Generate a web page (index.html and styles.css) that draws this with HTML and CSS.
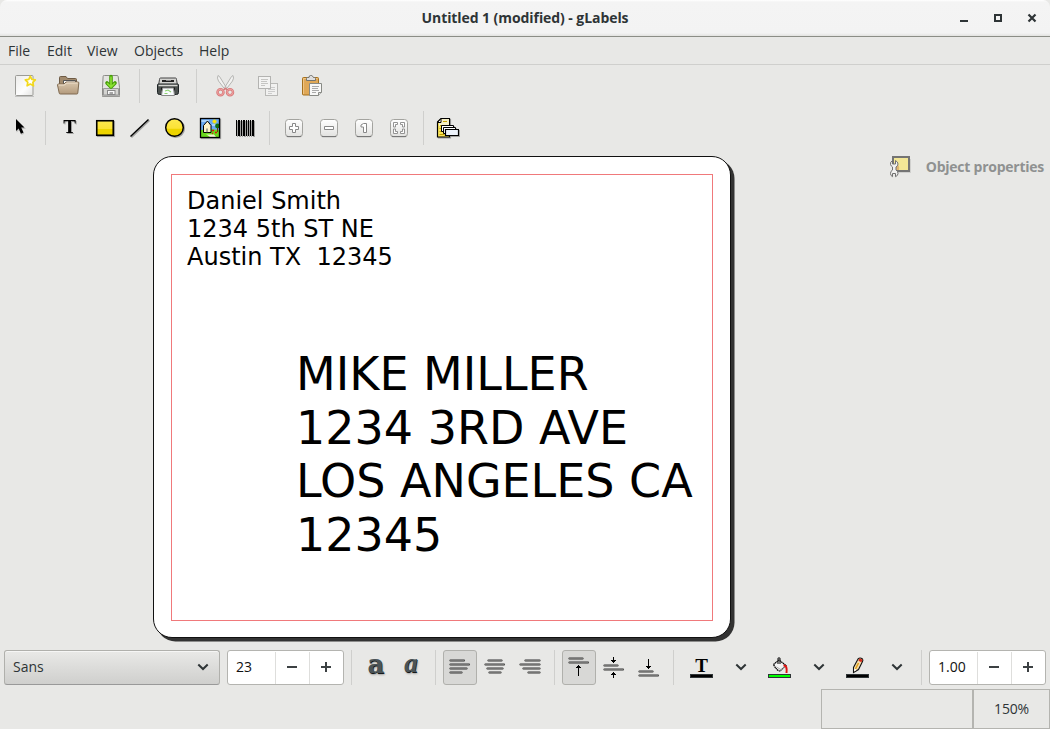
FILE: index.html
```html
<!DOCTYPE html>
<html lang="en">

<head>
    <meta charset="UTF-8">
    <meta name="viewport" content="width=device-width, initial-scale=1.0">
    <title>Untitled 1 (modified) - gLabels</title>
    <link rel="stylesheet" href="styles.css">
</head>

<body>
    <!-- shared gradients and small symbols -->
    <svg class="defs" width="0" height="0">
        <defs>
            <linearGradient id="yellow" x2="0" y2="1">
                <stop offset="0" stop-color="#fce94f" />
                <stop offset=".55" stop-color="#fbe236" />
                <stop offset=".58" stop-color="#edd400" />
                <stop offset="1" stop-color="#edd400" />
            </linearGradient>
            <linearGradient id="paper" x2="1" y2="1">
                <stop offset="0" stop-color="#ececea" />
                <stop offset=".6" stop-color="#fdfdfd" />
                <stop offset="1" stop-color="#e4e4e2" />
            </linearGradient>
            <linearGradient id="folder" x2="0" y2="1">
                <stop offset="0" stop-color="#d9c7ae" />
                <stop offset="1" stop-color="#b39a7c" />
            </linearGradient>
            <linearGradient id="key" x2="0" y2="1">
                <stop offset="0" stop-color="#fff" />
                <stop offset="1" stop-color="#e2e2e0" />
            </linearGradient>
        </defs>
        <symbol id="keycap" viewBox="0 0 24 24">
            <rect x="4.5" y="4.5" width="17" height="17" rx="3" fill="#aaa" opacity=".6" />
            <rect x="4.5" y="3.5" width="17" height="17" rx="3" fill="url(#key)" stroke="#a3a39f" />
            <path d="M6 20.5h14" stroke="#777" />
        </symbol>
        <symbol id="chevron" viewBox="0 0 12 8">
            <path d="M1.3 1.5L6 6l4.700-4.500" fill="none" stroke="#2e3436" stroke-width="2" />
        </symbol>
    </svg>

    <header class="titlebar">
        <h1>Untitled 1 (modified) - gLabels</h1>
        <div class="controls">
            <svg width="10" height="10"><path d="M1 8h8" stroke="#2e3436" stroke-width="2" /></svg>
            <svg width="10" height="10"><path d="M2 2h6v6h-6z" fill="none" stroke="#2e3436" stroke-width="2" /></svg>
            <svg width="10" height="10"><path d="M1.500 1.500l7 7M8.500 1.500l-7 7" stroke="#2e3436" stroke-width="2.200" /></svg>
        </div>
    </header>

    <nav class="menubar">
        <span class="m-file">File</span>
        <span class="m-edit">Edit</span>
        <span class="m-view">View</span>
        <span class="m-objects">Objects</span>
        <span class="m-help">Help</span>
    </nav>

    <div class="toolbar main">
        <!-- new -->
        <svg viewBox="0 0 24 24">
            <path d="M2 22.500h19" stroke="#aaa" opacity=".6" />
            <rect x="2.500" y="1.500" width="17.500" height="20" rx="1" fill="url(#paper)" stroke="#9b9b97" />
            <path d="M17.300 2.200l1.500 3.200 3.500.4-2.500 2.500.7 3.500-3.200-1.700-3.200 1.700.7-3.500-2.500-2.500 3.500-.4z" fill="#fff" stroke="#f3d91c" stroke-width="1.700" stroke-linejoin="round" />
        </svg>
        <!-- open -->
        <svg viewBox="0 0 24 24">
            <path d="M3.500 12V3.500q0-1 1-1h5.500l1.500 2h8q1 0 1 1V12z" fill="#a18a6d" stroke="#6e5b45" />
            <path d="M7.500 13V6.500h12V13" fill="#f8f8f6" stroke="#555" />
            <path d="M9 8.500h9" stroke="#bbb" />
            <path d="M1.500 11q0-1 1-1h5.500l2-2h12q1 0 .8 1l-1 10q-.1 1-1 1h-16.500q-1 0-1.100-1z" fill="url(#folder)" stroke="#806b52" />
            <path d="M2.600 11h6l2-2h11" fill="none" stroke="#eee0cc" />
        </svg>
        <!-- save -->
        <svg viewBox="0 0 24 24">
            <path d="M3 22.500h18" stroke="#777" opacity=".6" />
            <path d="M5.500 1.500h12.500q1 0 1.200 1l1.300 11v7.500q0 1-1 1h-15q-1 0-1-1v-7.500l.6-11q0-1 .9-1z" fill="#e4e4e1" stroke="#8b8b87" />
            <path d="M4.500 14.500h15v6.500h-15z" fill="#d4d4d1" stroke="#999" />
            <rect x="8.500" y="16.500" width="7.500" height="4" fill="#f7f7f7" stroke="#888" />
            <path d="M10.500 19h3.500" stroke="#555" />
            <path d="M12 2.500v10M8 9l4 4 4-4" fill="none" stroke="#459d07" stroke-width="3.600" stroke-linejoin="round" stroke-linecap="round" />
            <path d="M12 2.500v10M8 9l4 4 4-4" fill="none" stroke="#8be234" stroke-width="1.600" />
        </svg>
        <i class="sep"></i>
        <!-- print -->
        <svg viewBox="0 0 24 24">
            <path d="M3.500 5.500q0-1.500 1-1.500h15q1 0 1 1.500l1 6h-19z" fill="#d3d3d0" stroke="#444" />
            <path d="M6 7h12" stroke="#222" stroke-width="2" />
            <path d="M10 6.500h5" stroke="#888" />
            <path d="M1.500 11q0-1 1-1h19q1 0 1 1v7.500q0 2-2 2h-17q-2 0-2-2z" fill="#4b504e" stroke="#1e2426" />
            <path d="M2.500 11.500h19" stroke="#d4d4d0" stroke-width="1.500" />
            <path d="M5 15h14" stroke="#111" stroke-width="3" />
            <path d="M6.500 14h11l1 7.500h-13z" fill="#f8fbfd" stroke="#888" />
            <path d="M9 17l3-1 3 2M8.500 19.500h3" fill="none" stroke="#8ed16f" stroke-width="1.100" />
        </svg>
        <i class="sep"></i>
        <!-- cut -->
        <svg viewBox="0 0 24 24">
            <path d="M5 1.500q-1.300 2.500.5 5.500l6.200 8 1.600-1.500L6.500 2.500zM20 1.500q1.300 2.500-.5 5.500l-6.200 8-1.600-1.500L18.500 2.500z" fill="#f2f2f1" stroke="#b5b5b2" />
            <ellipse cx="7.500" cy="18.200" rx="3" ry="3" fill="none" stroke="#d77b7b" stroke-width="2.500" />
            <ellipse cx="17" cy="18.200" rx="3" ry="3" fill="none" stroke="#d77b7b" stroke-width="2.500" />
            <ellipse cx="7.500" cy="18.200" rx="3" ry="3" fill="none" stroke="#f1a3a3" />
            <ellipse cx="17" cy="18.200" rx="3" ry="3" fill="none" stroke="#f1a3a3" />
            <path d="M10.500 16l3-2M14.500 16l-3-2" stroke="#d77b7b" stroke-width="1.500" />
        </svg>
        <!-- copy -->
        <svg viewBox="0 0 24 24">
            <rect x="9.500" y="9.500" width="12" height="12" fill="#f1f1f0" stroke="#b9b9b7" />
            <path d="M14 13.500h5M12 15.500h7M12 17.500h7M12 19.500h4" stroke="#ccc" />
            <rect x="2.500" y="2.500" width="12" height="12" fill="#f3f3f2" stroke="#b3b3b1" />
            <path d="M5 5.500h7M5 7.500h6M5 9.500h7M5 11.500h4" stroke="#c5c5c3" />
        </svg>
        <!-- paste -->
        <svg viewBox="0 0 24 24">
            <rect x="3.500" y="3.500" width="16" height="17.500" rx="1" fill="#e0a857" stroke="#a5701d" />
            <path d="M4.500 20V4.500h14" fill="none" stroke="#f0c584" />
            <path d="M7.500 6.500v-2q0-1 1-1h1.500q0-2 1.500-2t1.500 0 1.500 2h1q1 0 1 1v2z" fill="#ddd" stroke="#73736f" />
            <path d="M10.500 9.500h12v9l-3 3h-9z" fill="#f8f8f7" stroke="#888a85" />
            <path d="M13 12.500h7M13 14.500h6M13 16.500h7M13 18.500h4" stroke="#aaa" />
            <path d="M22.500 18.500h-3v3" fill="#ddd" stroke="#888a85" />
        </svg>
    </div>

    <div class="toolbar drawing">
        <!-- select -->
        <svg viewBox="0 0 24 24">
            <path d="M8.500 4v12.500l2.800-2.600 2.300 5 2.600-1.200-2.200-4.700h4z" fill="#888" opacity=".4" />
            <path d="M8 3v12l2.700-2.500 2.200 5.300 2.600-1.200-2.300-5h3.300z" />
        </svg>
        <i class="sep"></i>
        <!-- text -->
        <svg viewBox="0 0 24 24" class="shadow">
            <text x="12.500" y="17" class="glyph">T</text>
        </svg>
        <!-- box -->
        <svg viewBox="0 0 24 24" class="shadow">
            <rect x="4.750" y="4.750" width="16.500" height="14.500" fill="url(#yellow)" stroke="#000" stroke-width="1.600" />
        </svg>
        <!-- line -->
        <svg viewBox="0 0 24 24" class="shadow">
            <path d="M3.500 20.500L21.500 3.500" stroke="#000" stroke-width="1.500" />
        </svg>
        <!-- ellipse -->
        <svg viewBox="0 0 24 24" class="shadow">
            <circle cx="12.500" cy="11.500" r="8.800" fill="url(#yellow)" stroke="#000" stroke-width="1.500" />
        </svg>
        <!-- image -->
        <svg viewBox="0 0 24 24" class="shadow">
            <rect x="3.500" y="2.500" width="19" height="19" fill="#6aa9f2" />
            <path d="M4 4h8v2h-8zM15 8h5v2h-5z" fill="#a9d2fa" />
            <path d="M4 14l8-1 10 1v7h-18z" fill="#6ad81d" />
            <path d="M17.500 3.500v4M15.500 5.500h4" stroke="#ffe600" stroke-width="2" />
            <path d="M6.500 16.500v-7l4-4.500 3.500 4.500v7z" fill="#fff3c9" stroke="#000" />
            <path d="M10 16.500v-4" stroke="#555" />
            <circle cx="20.500" cy="10" r="2.400" fill="#107010" />
            <path d="M20.500 12v4" stroke="#6b3b00" />
            <path d="M15 14.500h2M18 16.500h2M15 17.500h1" stroke="#e01010" stroke-width="1.500" />
            <path d="M9 18.500h8l2 2.500h-6l-2-1.500z" fill="#f5f5d5" />
            <rect x="3.500" y="2.500" width="19" height="19" fill="none" stroke="#000" stroke-width="1.300" />
        </svg>
        <!-- barcode -->
        <svg viewBox="0 0 24 24" class="shadow">
            <path d="M4 4h1v16h-1zM6 4h2v16h-2zM9 4h1v16h-1zM11 4h2v16h-2zM14 4h1v16h-1zM16 4h1v16h-1zM18 4h1v16h-1zM20 4h2v16h-2z" />
        </svg>
        <i class="sep"></i>
        <svg viewBox="0 0 24 24">
            <use href="#keycap" />
            <path d="M11.500 7.500h3v3h3v3h-3v3h-3v-3h-3v-3h3z" fill="#fff" stroke="#888" />
        </svg>
        <svg viewBox="0 0 24 24">
            <use href="#keycap" />
            <path d="M8.500 10.500h9v3h-9z" fill="#fff" stroke="#888" />
        </svg>
        <svg viewBox="0 0 24 24">
            <use href="#keycap" />
            <path d="M12.500 7.500h3v9h-3v-5.500h-2.500v-2z" fill="#fff" stroke="#888" />
        </svg>
        <svg viewBox="0 0 24 24">
            <use href="#keycap" />
            <path d="M7.500 11v-4.500h4v2h-2v2.500zM18.500 11v-4.500h-4v2h2v2.500zM7.500 13v4.500h4v-2h-2v-2.500zM18.500 13v4.500h-4v-2h2v-2.500z" fill="#fff" stroke="#888" stroke-width=".9" />
        </svg>
        <i class="sep"></i>
        <!-- merge -->
        <svg viewBox="0 0 24 24" class="shadow">
            <path d="M2.500 6l3.500-3.500h8.500v18.500h-12z" fill="#fbe65a" stroke="#000" stroke-width="1.200" />
            <path d="M6.500 3h7.500v7h-10v-3.500z" fill="#f5efc6" />
            <path d="M2.500 6.500h3.500v-4z" fill="#fff" stroke="#000" />
            <path d="M8 5.500h4M5 9.500h3M4.500 12.500h2M4.500 15.500h3M4.500 18.500h5" stroke="#c4a000" />
            <path d="M6.500 9.500h12v6h-12z" fill="#fff" stroke="#000" />
            <path d="M8.500 11.500h12v6h-12z" fill="#fff" stroke="#000" />
            <path d="M10.500 13.500h13v6h-13z" fill="#edf3fb" stroke="#000" stroke-width="1.200" />
        </svg>
    </div>

    <main class="workspace">
        <section class="canvas">
            <div class="label">
                <div class="margin-box">
                    <p class="sender">Daniel Smith
1234 5th ST NE
Austin TX  12345</p>
                    <p class="recipient">MIKE MILLER
1234 3RD AVE
LOS ANGELES CA
12345</p>
                </div>
            </div>
        </section>
        <aside class="properties">
            <svg viewBox="0 0 24 24" width="24" height="24">
                <path d="M5 4h17v14h-17z" fill="#999" opacity=".3" />
                <rect x="4" y="2" width="16" height="14" fill="#f3e796" stroke="#747474" stroke-width="2" />
                <path d="M7 15V9q4 1 3 6z" fill="#e2b66f" />
                <path d="M3.500 5.500q-2.500 1.500-2 4 .5 1.500 2 2.500v3q-2 1-2 3.500 0 2.200 2 3.200v-3.200h3v3.200q2.500-1 2.500-3.200t-2-3.500v-3q2-.9 2-3t-2.500-3.500v3.500h-3z" fill="#f0f0ef" stroke="#707070" />
            </svg>
            <h2>Object properties</h2>
        </aside>
    </main>

    <div class="formatbar">
        <div class="combo">Sans<svg width="12" height="8"><use href="#chevron" /></svg></div>
        <div class="spin">
            <span class="size">23</span>
            <b><svg width="10" height="10"><path d="M0 5h10" /></svg></b>
            <b><svg width="10" height="10"><path d="M0 5h10M5 0v10" /></svg></b>
        </div>
        <i class="sep"></i>
        <span class="btn bold-a">a</span>
        <span class="btn italic-a">a</span>
        <i class="sep"></i>
        <span class="btn active"><svg viewBox="0 0 24 24" class="lines">
            <path class="edge" d="M2.500 5.500h13.500M2.500 9.500h18.500M2.500 13.500h16M2.500 17.500h11" />
            <path d="M2.500 5.200h13.500M2.500 9.200h18.500M2.500 13.200h16M2.500 17.200h11" />
        </svg></span>
        <span class="btn"><svg viewBox="0 0 24 24" class="lines">
            <path class="edge" d="M5.500 5.500h13M2.500 9.500h18.500M4.500 13.500h15M6.500 17.500h11" />
            <path d="M5.500 5.200h13M2.500 9.200h18.500M4.500 13.200h15M6.500 17.200h11" />
        </svg></span>
        <span class="btn"><svg viewBox="0 0 24 24" class="lines">
            <path class="edge" d="M7.500 5.500h14M2.500 9.500h19M5.500 13.500h16M10.500 17.500h11" />
            <path d="M7.500 5.200h14M2.500 9.200h19M5.500 13.200h16M10.500 17.200h11" />
        </svg></span>
        <i class="sep"></i>
        <span class="btn active"><svg viewBox="0 0 24 24" class="lines">
            <path class="edge" d="M2.500 3.500h13M2.500 7.500h18.500" />
            <path d="M2.500 3.200h13M2.500 7.200h18.500" />
            <path class="arrow" d="M11.500 10v11M9 12.500h5M10 11.500h3" />
        </svg></span>
        <span class="btn"><svg viewBox="0 0 24 24" class="lines">
            <path class="edge" d="M2.500 10.500h13M2.500 14.500h18.500" />
            <path d="M2.500 10.200h13M2.500 14.200h18.500" />
            <path class="arrow" d="M11.500 2v6M9 5.500h5M10 6.500h3M11.500 17v6M9 19.500h5M10 18.500h3" />
        </svg></span>
        <span class="btn"><svg viewBox="0 0 24 24" class="lines">
            <path class="edge" d="M2.500 16.500h13M2.500 20.500h18.500" />
            <path d="M2.500 16.200h13M2.500 20.200h18.500" />
            <path class="arrow" d="M11.500 4v10M9 11.500h5M10 12.500h3" />
        </svg></span>
        <i class="sep"></i>
        <span class="btn color"><svg viewBox="0 0 24 24">
            <text x="11.500" y="17" class="glyph">T</text>
            <rect x=".5" y="19.500" width="22" height="3" stroke="#2e3436" />
        </svg></span>
        <span class="btn"><svg class="chev"><use href="#chevron" /></svg></span>
        <span class="btn color"><svg viewBox="0 0 24 24">
            <path d="M5.500 9.500l5.500-4.500 7 5.500-6 5.500q-3 0-6.500-6.500z" fill="#f4f4f4" stroke="#000" stroke-width="1.200" stroke-dasharray="1.500 .5" />
            <path d="M10 9V3.500q1-1.500 2 0V9" fill="none" stroke="#222" stroke-width="1.200" />
            <path d="M8.500 12l5 3 3-3" fill="none" stroke="#aaa" />
            <path d="M15.500 10.500q4-.5 3 7.500" fill="none" stroke="#df1010" stroke-width="2" />
            <rect x=".5" y="19.500" width="22" height="3" fill="#0f0" stroke="#2e3436" />
        </svg></span>
        <span class="btn"><svg class="chev"><use href="#chevron" /></svg></span>
        <span class="btn color"><svg viewBox="0 0 24 24">
            <path d="M7.500 17.500v-5l4.500-8.500q2-2 4.500 0 .8 1 0 2.500l-4 8z" fill="#f6dcaa" stroke="#111" stroke-width="1.100" />
            <path d="M13 4.500l3 1.500" stroke="#d42a1a" stroke-width="2.600" />
            <path d="M12.500 8l-3 6" stroke="#dfa01c" stroke-width="1.600" />
            <path d="M8.500 13.500l-.5 3 2.500-1.500z" fill="#fff" />
            <rect x=".5" y="19.500" width="22" height="3" stroke="#2e3436" />
        </svg></span>
        <span class="btn"><svg class="chev"><use href="#chevron" /></svg></span>
        <i class="sep"></i>
        <div class="spin">
            <span class="width">1.00</span>
            <b><svg width="10" height="10"><path d="M0 5h10" /></svg></b>
            <b><svg width="10" height="10"><path d="M0 5h10M5 0v10" /></svg></b>
        </div>
    </div>

    <footer class="statusbar">
        <div class="message"></div>
        <div class="zoom">150%</div>
    </footer>
</body>

</html>
```
FILE: styles.css
```css
* {
    box-sizing: border-box;
}

body {
    margin: 0;
    width: 1050px;
    height: 729px;
    overflow: hidden;
    display: flex;
    flex-direction: column;
    background-color: #e8e8e6;
    color: #2e3436;
    font-family: "Open Sans", "Noto Sans", sans-serif;
    font-size: 14px;
}

svg {
    display: block;
    flex: none;
}

.defs {
    position: absolute;
}

.titlebar {
    height: 37px;
    flex: none;
    display: grid;
    grid-template-columns: 1fr auto 1fr;
    align-items: center;
    background: linear-gradient(#fff 0, #f4f4f4 2px, #f3f3f3 33px, #e2e2e0 36px);
    border-bottom: 1px solid #8b8d86;
    border-radius: 7px 7px 0 0;
}

h1 {
    grid-column: 2;
    margin: 0;
    font-size: 14px;
    font-weight: bold;
    line-height: 36px;
    letter-spacing: -0.07px;
}

.controls {
    display: flex;
    justify-content: flex-end;
    gap: 24px;
    padding-right: 13px;
}

.menubar {
    height: 28px;
    flex: none;
    display: flex;
    line-height: 28px;
    border-bottom: 1px solid #cfcfcd;
}

.menubar span {
    padding-left: 8px;
    width: 39px;
    white-space: nowrap;
}

.menubar .m-view {
    width: 48px;
    padding-left: 9px;
}

.menubar .m-objects {
    width: 65px;
}

.toolbar {
    height: 42px;
    flex: none;
    display: flex;
    align-items: center;
}

.toolbar svg {
    width: 24px;
    height: 24px;
}

.main {
    padding-left: 4px;
}

.main svg {
    margin: 0 10px 0 9px;
}

.main .sep {
    margin: 0 7px 0 6px;
}

.drawing {
    padding-left: 3px;
}

.drawing svg {
    margin: 0 6px 0 5px;
}

.drawing .sep {
    margin: 0 6px 0 7px;
}

.sep {
    flex: none;
    width: 1px;
    height: 34px;
    background-color: #cfcfcd;
}

.shadow {
    filter: drop-shadow(1px 1px 0.7px rgba(0, 0, 0, 0.3));
}

.glyph {
    font: bold 19px "Liberation Serif", serif;
    text-anchor: middle;
    fill: #000;
}

.workspace {
    flex: 1;
    display: flex;
    justify-content: space-between;
}

.canvas {
    padding: 7px 0 0 153px;
}

.label {
    width: 578px;
    height: 482px;
    padding: 17px 17px 17px;
    background-color: #fff;
    border: 1px solid #111;
    border-radius: 19px;
    box-shadow: 3.5px 3.5px 0 #333;
}

.margin-box {
    width: 542px;
    height: 447px;
    border: 1px solid #f0797b;
    padding: 12px 0 0 15px;
}

.sender,
.recipient {
    margin: 0;
    color: #000;
    font-family: "DejaVu Sans", sans-serif;
    white-space: pre;
}

.sender {
    font-size: 24px;
    line-height: 28px;
}

.recipient {
    font-size: 46px;
    line-height: 53.5px;
    margin: 77px 0 0 109px;
}

.properties {
    display: flex;
    align-items: flex-start;
    padding: 6px 6px 0 0;
}

h2 {
    margin: 1px 0 0 13px;
    font-size: 14px;
    line-height: 22px;
    color: #8f9191;
    letter-spacing: -0.25px;
}

.formatbar {
    height: 43px;
    flex: none;
    display: flex;
    align-items: flex-start;
    gap: 1px;
    padding: 4px 0 0 4px;
}

.formatbar .sep {
    height: 35px;
    margin: 0 6px;
}

.combo {
    width: 216px;
    height: 35px;
    display: flex;
    align-items: center;
    justify-content: space-between;
    padding: 0 10px 2px 8px;
    border: 1px solid #b0b0ac;
    border-bottom-color: #999;
    border-radius: 3px;
    background: linear-gradient(#e9e9e7, #cfcfcd);
    box-shadow: inset 0 1px #f6f6f5;
    margin-right: 6px;
}

.spin {
    width: 117px;
    height: 35px;
    display: flex;
    align-items: center;
    background-color: #fff;
    border: 1px solid #b4b4b0;
    border-radius: 3px;
    color: #111;
}

.spin span {
    flex: 1;
    padding: 0 0 2px 8px;
}

.spin b {
    width: 34px;
    height: 32px;
    display: flex;
    align-items: center;
    justify-content: center;
    padding: 0 2px 1px 0;
    border-left: 1px solid #dededc;
}

.spin path {
    stroke: #3c4143;
    stroke-width: 2;
}

.btn {
    width: 34px;
    height: 35px;
    display: flex;
    align-items: center;
    justify-content: center;
    padding-bottom: 1px;
    border: 1px solid transparent;
    border-radius: 3px;
}

.btn svg {
    width: 24px;
    height: 24px;
}

.btn .chev {
    width: 12px;
    height: 8px;
}

.active {
    background-color: #d8d8d6;
    border-color: #b0b0ac;
}

.color {
    width: 42px;
}

.bold-a,
.italic-a {
    padding-bottom: 7px;
    color: #4b5457;
    text-shadow: 0.5px 1px 0 #15191a, 1px 2px 2px rgba(0, 0, 0, 0.3);
}

.bold-a {
    font: bold 26px "DejaVu Serif", serif;
}

.italic-a {
    font: italic bold 27px "Liberation Serif", serif;
    padding-bottom: 9px;
}

.lines path {
    fill: none;
    stroke: #8c8c8a;
    stroke-width: 1.1;
    stroke-linecap: round;
}

.lines .edge {
    stroke: #333;
    stroke-width: 2.2;
}

.lines .arrow {
    stroke: #000;
    stroke-width: 1;
    stroke-linecap: butt;
}

.statusbar {
    height: 40px;
    flex: none;
    display: flex;
    justify-content: flex-end;
}

.statusbar div {
    border: 1px solid #b4b4b0;
    line-height: 38px;
    text-align: center;
}

.message {
    width: 152px;
}

.zoom {
    width: 77px;
    letter-spacing: -0.2px;
}
```
